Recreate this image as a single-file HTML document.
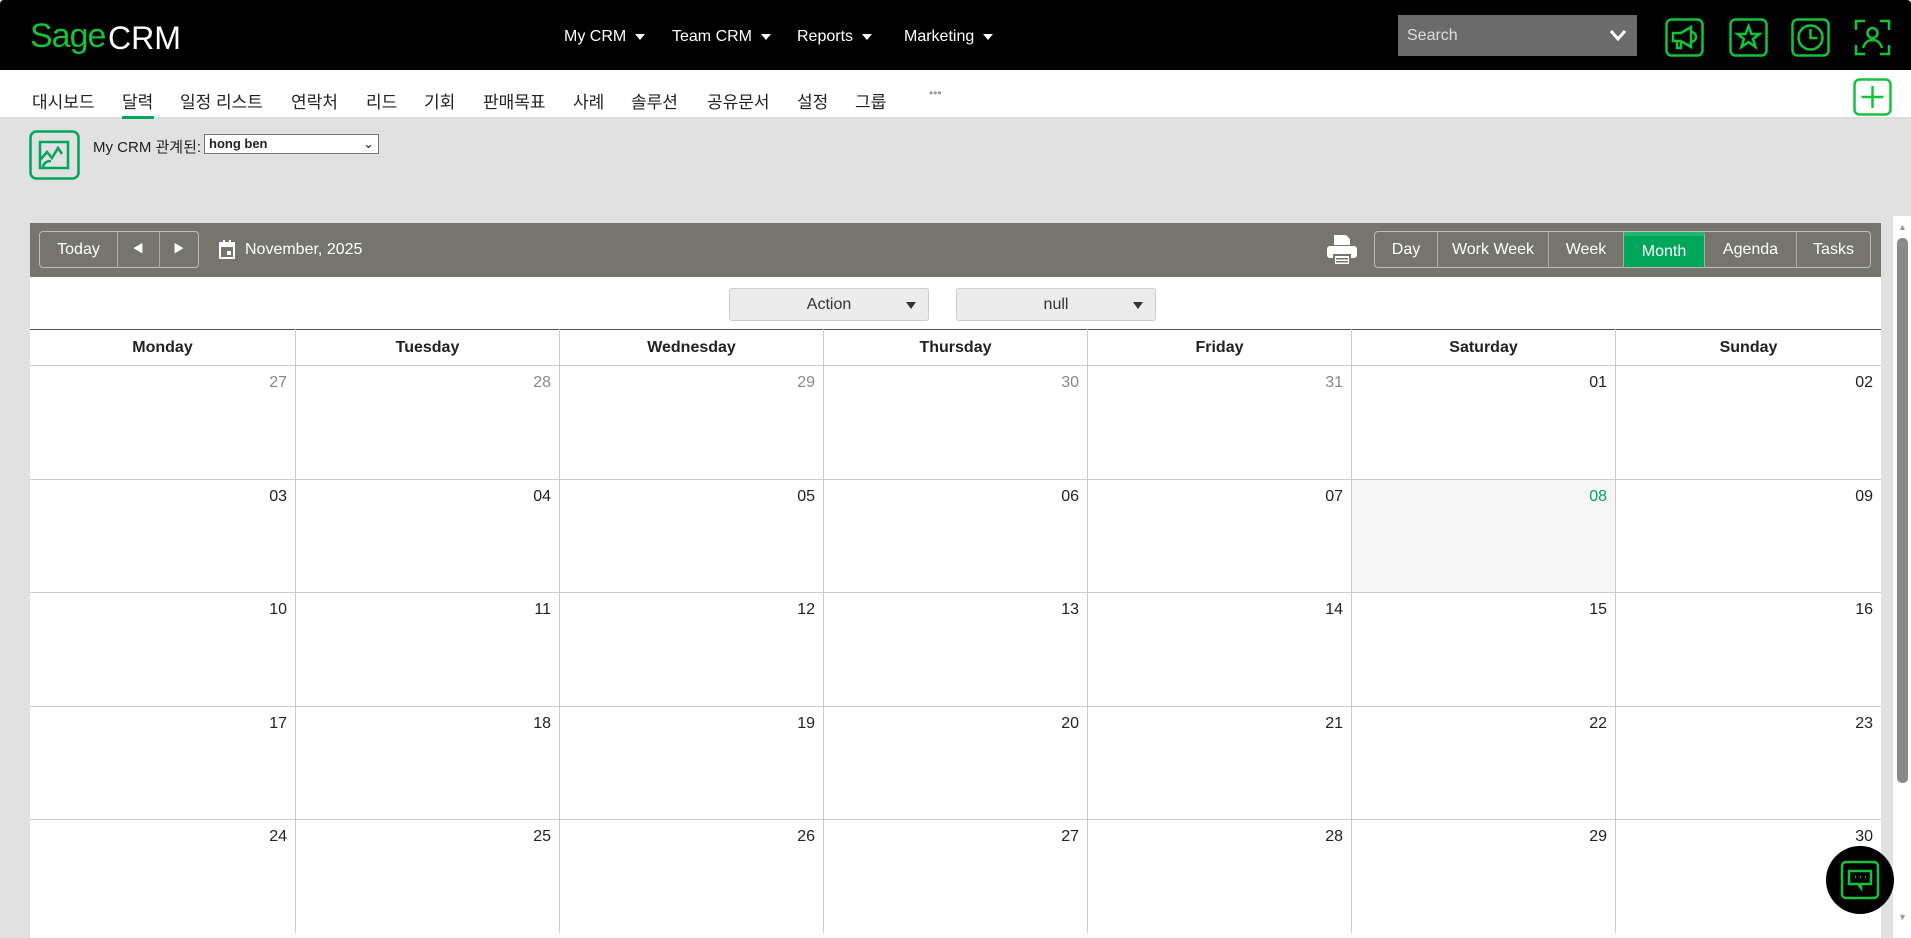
<!DOCTYPE html>
<html><head><meta charset="utf-8">
<style>
*{margin:0;padding:0;box-sizing:border-box}
body{width:1911px;height:938px;overflow:hidden;background:#e1e1e1;font-family:"Liberation Sans","Noto Sans CJK KR",sans-serif;position:relative;color:#222}
.a{position:absolute}
#hdr{left:0;top:0;width:1911px;height:70px;background:#000;border-radius:4px 4px 0 0}
.menu{color:#fff;font-size:16px;top:28px}
.menu:after{content:"";display:inline-block;margin-left:9px;border-left:5px solid transparent;border-right:5px solid transparent;border-top:6px solid #fff;vertical-align:middle}
#nav{left:0;top:70px;width:1911px;height:49px;background:#fff;border-bottom:2px solid #ddd}
.tab{top:88px;font-size:17px;color:#222}
#tb{left:30px;top:223px;width:1851px;height:54px;background:#75756d}
.btn{color:#fff;font-size:16px;text-align:center;line-height:35px;border-right:1px solid #aaa}
.grp{border:1px solid #bbb;border-radius:4px;height:37px;top:231px;display:flex}
#cal{left:30px;top:277px;width:1851px;height:661px;background:#fff}
.dd{top:288px;height:33px;width:200px;background:#ececec;border:1px solid #ccc;border-radius:3px;font-size:16px;line-height:31px;text-align:center;color:#333}
.dd:after{content:"";position:absolute;right:12px;top:13px;border-left:5px solid transparent;border-right:5px solid transparent;border-top:7px solid #333}
.hd{top:329px;height:37px;font-weight:bold;font-size:16px;text-align:center;line-height:37px;border-left:1px solid #ccc}
.cell{border-left:1px solid #ccc;border-top:1px solid #ccc;font-size:16px;text-align:right;padding:8px 8px 0 0;color:#222}
</style></head><body>
<div id="hdr" class="a"></div>
<div class="a" style="left:30px;top:17px;font-size:34px;color:#14c33c;letter-spacing:-1px">Sage</div>
<div class="a" style="left:108px;top:20px;font-size:32px;color:#fff">CRM</div>
<div class="a menu" style="left:564px">My CRM</div>
<div class="a menu" style="left:672px">Team CRM</div>
<div class="a menu" style="left:797px">Reports</div>
<div class="a menu" style="left:904px">Marketing</div>
<div class="a" style="left:1398px;top:15px;width:239px;height:41px;background:#6b6b6b;color:#ddd;font-size:16px;line-height:41px;padding-left:9px">Search
<svg class="a" style="right:10px;top:12px" width="18" height="16" viewBox="0 0 18 16"><path d="M2 4l7 8 7-8" stroke="#fff" stroke-width="3" fill="none"/></svg></div>
<svg class="a" style="left:1665px;top:18px" width="39" height="39" viewBox="0 0 39 39" fill="none" stroke="#14c33c" stroke-width="2.5"><rect x="1.5" y="1.5" width="36" height="36" rx="5"/><path d="M8 15h8l10-6v20l-10-6H8zM12 23v7h4v-7M26 14a5 5 0 0 1 0 10"/></svg>
<svg class="a" style="left:1729px;top:18px" width="39" height="39" viewBox="0 0 39 39" fill="none" stroke="#14c33c" stroke-width="2.5"><rect x="1.5" y="1.5" width="36" height="36" rx="5"/><path d="M19.5 8l3 8h8l-6.5 5 2.5 8-7-5-7 5 2.5-8-6.5-5h8z"/></svg>
<svg class="a" style="left:1791px;top:18px" width="39" height="39" viewBox="0 0 39 39" fill="none" stroke="#14c33c" stroke-width="2.5"><rect x="1.5" y="1.5" width="36" height="36" rx="5"/><circle cx="19.5" cy="19.5" r="12"/><path d="M19.5 11v9h7"/></svg>
<svg class="a" style="left:1853px;top:18px" width="39" height="39" viewBox="0 0 39 39" fill="none" stroke="#14c33c" stroke-width="2.5"><path d="M3 12V3h9M27 3h9v9M36 27v9h-9M12 36H3v-9"/><circle cx="19.5" cy="15" r="5"/><path d="M10 30c2-6 5-8 9.5-8s7.5 2 9.5 8"/></svg>
<div id="nav" class="a"></div>
<div class="a tab" style="left:32px">대시보드</div>
<div class="a tab" style="left:122px">달력</div>
<div class="a" style="left:122px;top:116px;width:32px;height:3px;background:#00a65a"></div>
<div class="a tab" style="left:180px">일정 리스트</div>
<div class="a tab" style="left:291px">연락처</div>
<div class="a tab" style="left:366px">리드</div>
<div class="a tab" style="left:424px">기회</div>
<div class="a tab" style="left:483px">판매목표</div>
<div class="a tab" style="left:573px">사례</div>
<div class="a tab" style="left:631px">솔루션</div>
<div class="a tab" style="left:707px">공유문서</div>
<div class="a tab" style="left:797px">설정</div>
<div class="a tab" style="left:855px">그룹</div>
<div class="a" style="left:929px;top:86px;font-size:12px;color:#999">•••</div>
<svg class="a" style="left:1853px;top:78px" width="39" height="38" viewBox="0 0 39 38" fill="none" stroke="#14c33c" stroke-width="2.5"><rect x="1.5" y="1.5" width="36" height="35" rx="5"/><path d="M19.5 8v22M8.5 19h22"/></svg>
<svg class="a" style="left:29px;top:130px" width="51" height="50" viewBox="0 0 51 50" fill="none" stroke="#00a65a" stroke-width="2.5"><rect x="1.5" y="1.5" width="48" height="47" rx="6"/><path d="M11 12h28v26H11zM11 30l7-8 5 6 6-10 4 6M14 38c0-5 4-7 8-7"/></svg>
<div class="a" style="left:93px;top:136px;font-size:15px;color:#222">My CRM 관계된:</div>
<div class="a" style="left:204px;top:134px;width:175px;height:20px;background:#fff;border:1px solid #777;font-size:13px;font-weight:bold;line-height:18px;padding-left:4px">hong ben<span style="position:absolute;right:4px;font-weight:normal">⌄</span></div>
<div id="tb" class="a"></div>
<div class="a grp" style="left:39px;width:160px">
<div class="btn" style="width:79px">Today</div><div class="btn" style="width:42px;font-size:11px">◀</div><div class="btn" style="width:39px;border:0;font-size:11px">▶</div></div>
<svg class="a" style="left:219px;top:240px" width="16" height="19" viewBox="0 0 16 19"><rect x="1" y="3" width="14" height="15" fill="none" stroke="#fff" stroke-width="2"/><rect x="1" y="3" width="14" height="4" fill="#fff"/><rect x="4" y="0" width="2" height="4" fill="#fff"/><rect x="10" y="0" width="2" height="4" fill="#fff"/><rect x="8" y="11" width="4" height="4" fill="#fff"/></svg>
<div class="a" style="left:245px;top:241px;font-size:16px;color:#fff">November, 2025</div>
<svg class="a" style="left:1326px;top:234px" width="32" height="32" viewBox="0 0 32 32" fill="#fff"><path d="M8 1h12l4 4v6H8z"/><rect x="1" y="12" width="30" height="12" rx="3"/><rect x="7" y="20" width="18" height="11" fill="#75756d"/><rect x="9" y="22" width="14" height="8"/><rect x="10" y="24" width="12" height="1.5" fill="#75756d"/><rect x="10" y="27" width="12" height="1.5" fill="#75756d"/></svg>
<div class="a grp" style="left:1374px;width:497px">
<div class="btn" style="width:63px">Day</div><div class="btn" style="width:111px">Work Week</div><div class="btn" style="width:75px">Week</div><div class="btn" style="width:81px;background:#00a65a;border-top:4px solid #1fb574;line-height:31px">Month</div><div class="btn" style="width:92px">Agenda</div><div class="btn" style="width:73px;border:0">Tasks</div></div>
<div id="cal" class="a"></div>
<div class="a dd" style="left:729px">Action</div>
<div class="a dd" style="left:956px">null</div>
<div class="a" style="left:30px;top:329px;width:1851px;height:1px;background:#555"></div>
<div class="a hd" style="left:30px;width:265px;border-left:0">Monday</div>
<div class="a hd" style="left:295px;width:264px">Tuesday</div>
<div class="a hd" style="left:559px;width:264px">Wednesday</div>
<div class="a hd" style="left:823px;width:264px">Thursday</div>
<div class="a hd" style="left:1087px;width:264px">Friday</div>
<div class="a hd" style="left:1351px;width:264px">Saturday</div>
<div class="a hd" style="left:1615px;width:266px">Sunday</div>
<div class="a" style="left:30px;top:365px;width:1851px;display:grid;grid-template-columns:265px 264px 264px 264px 264px 264px 266px;grid-auto-rows:113.6px">
<div class="cell" style="border-left:0;color:#888">27</div><div class="cell" style="color:#888">28</div><div class="cell" style="color:#888">29</div><div class="cell" style="color:#888">30</div><div class="cell" style="color:#888">31</div><div class="cell">01</div><div class="cell">02</div>
<div class="cell" style="border-left:0">03</div><div class="cell">04</div><div class="cell">05</div><div class="cell">06</div><div class="cell">07</div><div class="cell" style="background:#f6f6f6;color:#00a65a">08</div><div class="cell">09</div>
<div class="cell" style="border-left:0">10</div><div class="cell">11</div><div class="cell">12</div><div class="cell">13</div><div class="cell">14</div><div class="cell">15</div><div class="cell">16</div>
<div class="cell" style="border-left:0">17</div><div class="cell">18</div><div class="cell">19</div><div class="cell">20</div><div class="cell">21</div><div class="cell">22</div><div class="cell">23</div>
<div class="cell" style="border-left:0">24</div><div class="cell">25</div><div class="cell">26</div><div class="cell">27</div><div class="cell">28</div><div class="cell">29</div><div class="cell">30</div>
</div>
<div class="a" style="left:1893px;top:216px;width:18px;height:722px;background:#fff"></div>
<div class="a" style="left:1898px;top:222px;font-size:9px;color:#999">▲</div>
<div class="a" style="left:1898px;top:912px;font-size:9px;color:#999">▼</div>
<div class="a" style="left:1897px;top:238px;width:11px;height:545px;background:#8a8a8a;border-radius:5px"></div>
<div class="a" style="left:1826px;top:846px;width:68px;height:68px;border-radius:50%;background:#000"></div>
<svg class="a" style="left:1840px;top:860px" width="40" height="40" viewBox="0 0 40 40" fill="none" stroke="#14c33c" stroke-width="2.5"><rect x="2" y="2" width="36" height="36" rx="4"/><path d="M9 11h22v13H21v4l-3-4H9z"/><path d="M15 17h1M20 17h1M25 17h1" stroke-width="2"/></svg>
</body></html>
